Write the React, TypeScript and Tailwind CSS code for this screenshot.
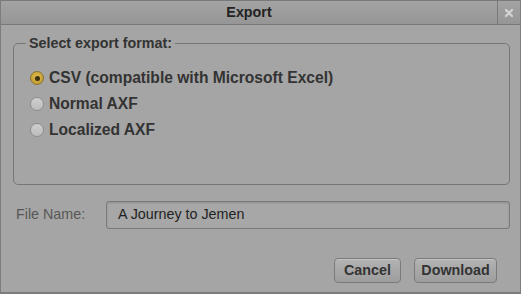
import React from "react";

const options = [
  { label: "CSV (compatible with Microsoft Excel)", checked: true },
  { label: "Normal AXF", checked: false },
  { label: "Localized AXF", checked: false },
];

function Radio({ checked }: { checked: boolean }) {
  if (checked) {
    return (
      <span className="flex h-[14px] w-[14px] shrink-0 items-center justify-center rounded-full border border-[#8a7330] bg-[radial-gradient(circle_at_50%_40%,#e0bd4e,#b8922a)]">
        <span className="h-[5px] w-[5px] rounded-full bg-[#3a2e10]" />
      </span>
    );
  }
  return (
    <span className="h-[14px] w-[14px] shrink-0 rounded-full border border-[#8c8c8c] bg-[linear-gradient(#cfcfcf,#bcbcbc)]" />
  );
}

export default function App() {
  return (
    <div className="flex h-[294px] w-[521px] flex-col border-x border-b-2 border-[#7c7c7c] bg-[#a5a5a5] font-['Liberation_Sans',Arial,sans-serif] text-[14.3px] text-[#2e2e2e]">
      <div className="flex h-[25px] shrink-0 items-center border-y border-[#787878] bg-[linear-gradient(#a3a3a3,#969696)]">
        <span className="flex-1 text-center font-bold text-[#222]">Export</span>
        <div className="flex h-full w-[23px] items-center justify-center border-l border-[#7a7a7a]">
          <svg width="10" height="10" viewBox="0 0 10 10">
            <path d="M2 2 L8 8 M8 2 L2 8" stroke="#d4d4d4" strokeWidth="2.2" strokeLinecap="round" />
          </svg>
        </div>
      </div>

      <div className="flex flex-1 flex-col pl-[12px] pr-[10px] pt-[10px]">
        <fieldset className="h-[150px] rounded-[5px] border border-[#777] pl-[16px]">
          <legend className="-ml-[4px] px-[3px] font-bold leading-[16px] text-[#333]">
            Select export format:
          </legend>
          <div className="mt-[14px] flex flex-col">
            {options.map((o) => (
              <label key={o.label} className="flex h-[26px] items-center gap-[5px] text-[15.6px] font-bold text-[#333]">
                <Radio checked={o.checked} />
                <span>{o.label}</span>
              </label>
            ))}
          </div>
        </fieldset>

        <div className="mt-[16px] flex items-center">
          <span className="ml-[3px] w-[90px] text-[#575757]">File Name:</span>
          <div className="flex h-[28px] flex-1 items-center rounded-[3px] border border-[#7a7a7a] bg-[#a7a7a7] pl-[11px] text-[#222] shadow-[inset_0_1px_2px_rgba(0,0,0,0.15)]">
            A Journey to Jemen
          </div>
        </div>

        <div className="mt-[29px] flex justify-end gap-[13px] pr-[13px]">
          <button className="h-[25px] w-[67px] rounded-[4px] border border-[#7a7a7a] bg-[linear-gradient(#b3b3b3,#9d9d9d)] font-bold text-[#333] shadow-[inset_0_1px_0_rgba(255,255,255,0.25)]">
            Cancel
          </button>
          <button className="h-[25px] w-[83px] rounded-[4px] border border-[#7a7a7a] bg-[linear-gradient(#b3b3b3,#9d9d9d)] font-bold text-[#333] shadow-[inset_0_1px_0_rgba(255,255,255,0.25)]">
            Download
          </button>
        </div>
      </div>
    </div>
  );
}
